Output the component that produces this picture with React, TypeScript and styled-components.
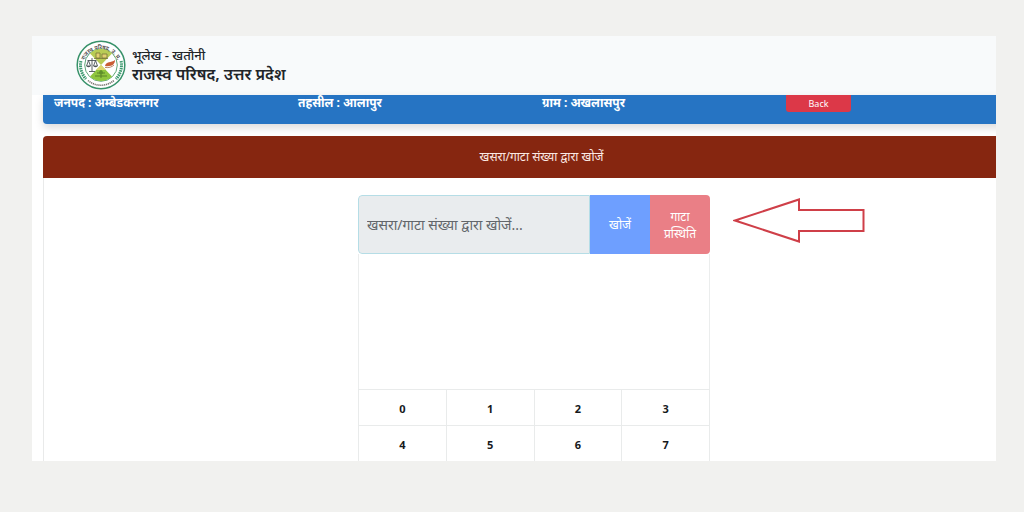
import React from "react";
import styled, { createGlobalStyle } from "styled-components";

const GlobalStyle = createGlobalStyle`
  * { box-sizing: border-box; }
  body {
    margin: 0;
    background: #f1f1ef;
    color: #212529;
    font-family: "Noto Sans", "Noto Sans Devanagari", "Open Sans", sans-serif;
  }
  button, input { font-family: inherit; }
`;

const Page = styled.div`
  padding: 36px 28px 51px 32px;
`;

const Frame = styled.main`
  background: #ffffff;
  overflow: hidden;
`;

const Header = styled.header`
  display: flex;
  align-items: center;
  gap: 6px;
  height: 59px;
  padding-left: 44px;
  padding-bottom: 2px;
  background: #f8fafb;
`;

const Titles = styled.div`
  display: flex;
  flex-direction: column;
`;

const SiteName = styled.span`
  font-size: 13px;
  line-height: 18px;
  font-weight: 500;
`;

const OrgName = styled.h1`
  margin: 0;
  font-size: 16px;
  line-height: 20px;
  font-weight: 600;
`;

const Content = styled.div`
  width: calc(100% + 44px);
  padding-left: 11px;
`;

const Location = styled.section`
  display: grid;
  grid-template-columns: repeat(4, 244px);
  align-items: start;
  height: 29px;
  padding-left: 11px;
  border-radius: 0 0 4px 4px;
  background: #2674c3;
  color: #ffffff;
  box-shadow: 0 4px 8px rgba(0, 0, 0, 0.14);
`;

const Place = styled.span`
  font-size: 12px;
  line-height: 16px;
  font-weight: 700;
`;

const BackButton = styled.button`
  width: 65px;
  height: 17px;
  padding: 0;
  border: 0;
  border-radius: 0 0 3px 3px;
  background: #dc3848;
  color: #ffffff;
  font-size: 9px;
  line-height: 16px;
`;

const Card = styled.section`
  margin-top: 12px;
  border-left: 1px solid #e9eaea;
  border-radius: 4px 4px 0 0;
`;

const CardTitle = styled.h2`
  margin: 0 0 0 -1px;
  border-radius: 4px 4px 0 0;
  background: #862610;
  color: #fbe9e3;
  font-size: 12px;
  line-height: 42px;
  font-weight: 400;
  text-align: center;
`;

const CardBody = styled.div`
  display: flex;
  justify-content: center;
  padding: 17px 16px 0 0;
`;

const SearchColumn = styled.div`
  position: relative;
  width: 352px;
`;

const SearchForm = styled.form`
  display: flex;
  height: 59px;
  border-radius: 4px;
  overflow: hidden;
`;

const SearchInput = styled.input`
  flex: 1;
  min-width: 0;
  padding: 0 8px;
  border: 1px solid #b5dde6;
  border-radius: 4px 0 0 4px;
  background: #e9ecee;
  color: #55595c;
  font-size: 14px;
  outline: none;
  &::placeholder { color: #62666a; opacity: 1; }
`;

const ActionButton = styled.button<{ $tone: string }>`
  width: 60px;
  padding: 0 8px;
  border: 0;
  background: ${(p) => p.$tone};
  color: #ffffff;
  font-size: 12px;
  line-height: 17px;
`;

const Results = styled.div`
  height: 135px;
  border: 1px solid #ebeded;
  border-width: 0 1px;
`;

const Keypad = styled.div`
  display: grid;
  grid-template-columns: repeat(4, 1fr);
  border-left: 1px solid #e9ebeb;
`;

const Key = styled.button`
  height: 36px;
  padding: 2px 0 0;
  border: 1px solid #e9ebeb;
  border-width: 1px 1px 0 0;
  background: #ffffff;
  color: #16191c;
  font-size: 11px;
  font-weight: 700;
`;

const Pointer = styled.svg`
  position: absolute;
  left: calc(100% + 23px);
  top: 2px;
`;

const Emblem = () => (
  <svg width="50" height="50" viewBox="0 0 50 50" role="img" aria-label="राजस्व परिषद">
    <defs>
      <path id="upper" d="M7 27 A18 18 0 1 1 43 27" />
    </defs>
    <circle cx="25" cy="25" r="23.8" fill="#fff" stroke="#38926a" strokeWidth="1.5" />
    <path d="M4.9 21 A20.5 20.5 0 0 0 10 39" fill="none" stroke="#3d9a70" strokeWidth="3" strokeDasharray="1.5 .8" />
    <path d="M45.1 21 A20.5 20.5 0 0 1 40 39" fill="none" stroke="#3d9a70" strokeWidth="3" strokeDasharray="1.5 .8" />
    <path d="M12 40.5 A20.3 20.3 0 0 0 38 40.5" fill="none" stroke="#77726c" strokeWidth="1.6" strokeDasharray="1.2 .7" />
    <circle cx="25" cy="25" r="16.3" fill="#fff" stroke="#5fa778" strokeWidth="1" />
    <path d="M25 25 L14 13.500 A15.8 15.8 0 0 1 36 13.500 Z" fill="#b8cb55" />
    <path d="M25 25 L14 36.500 A15.8 15.8 0 0 0 36 36.500 Z" fill="#8fc63e" />
    <path d="M25 25 L20 30 H30 Z" fill="#dfd76d" />
    <path d="M20 13 h4 v5 h-4z M26 14 h5 v4 h-5z M18 18.5 h14" fill="#e2cf70" stroke="#77763a" strokeWidth=".8" />
    <path d="M16 18 V31 M13 31.5 H19 M11.5 20.5 H20.5 M12.5 20.5 L10.5 26 H14.5 Z M19.5 20.5 L17.5 26 H21.5 Z" fill="none" stroke="#4a5156" strokeWidth=".9" />
    <path d="M10.5 26 q2 2.6 4 0z M17.5 26 q2 2.6 4 0z" fill="#4a5156" />
    <path d="M29 26 C30 21 35 23 39 20 C39 24 36 27 29 26Z" fill="#c95d35" />
    <path d="M29 27.5 C33 28 36 27 38 25" fill="none" stroke="#bd8a69" strokeWidth="1" />
    <path d="M25 30 V38 M21 33 H29 M19 36 H31" stroke="#557e26" strokeWidth=".9" />
    <circle cx="25" cy="32.5" r="2" fill="#5f902b" />
    <text fontSize="5.5" fontWeight="600" fill="#4b4646" textAnchor="middle">
      <textPath href="#upper" startOffset="50%">राजस्व परिषद, उ. प्र.</textPath>
    </text>
  </svg>
);

const places = ["जनपद : अम्बेडकरनगर", "तहसील : आलापुर", "ग्राम : अखलासपुर"];
const keys = ["0", "1", "2", "3", "4", "5", "6", "7"];

export default function App() {
  return (
    <Page>
      <GlobalStyle />
      <Frame>
        <Header>
          <Emblem />
          <Titles>
            <SiteName>भूलेख - खतौनी</SiteName>
            <OrgName>राजस्व परिषद, उत्तर प्रदेश</OrgName>
          </Titles>
        </Header>
        <Content>
          <Location>
            {places.map((place) => (
              <Place key={place}>{place}</Place>
            ))}
            <BackButton type="button">Back</BackButton>
          </Location>
          <Card>
            <CardTitle>खसरा/गाटा संख्या द्वारा खोजें</CardTitle>
            <CardBody>
              <SearchColumn>
                <SearchForm onSubmit={(e) => e.preventDefault()}>
                  <SearchInput
                    aria-label="खसरा/गाटा संख्या द्वारा खोजें"
                    placeholder="खसरा/गाटा संख्या द्वारा खोजें..."
                  />
                  <ActionButton type="submit" $tone="#6e9fff">खोजें</ActionButton>
                  <ActionButton type="button" $tone="#ea7f86">गाटा प्रस्थिति</ActionButton>
                </SearchForm>
                <Results />
                <Keypad>
                  {keys.map((k) => (
                    <Key type="button" key={k}>{k}</Key>
                  ))}
                </Keypad>
                <Pointer width="134" height="48" viewBox="0 0 134 48" aria-hidden="true">
                  <path
                    d="M2 23.5 L66 2.5 V13 H130.500 V34 H66 V44.500 Z"
                    fill="#fff"
                    stroke="#cf3f48"
                    strokeWidth="2"
                  />
                </Pointer>
              </SearchColumn>
            </CardBody>
          </Card>
        </Content>
      </Frame>
    </Page>
  );
}
